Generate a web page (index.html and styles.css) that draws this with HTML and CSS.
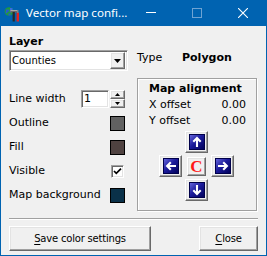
FILE: index.html
```html
<!DOCTYPE html>
<html>
<head>
<meta charset="utf-8">
<link rel="stylesheet" href="styles.css">
</head>
<body>
<div class="window">
  <div class="titlebar">
    <svg class="appicon" viewBox="0 0 16 16" width="16" height="16">
      <circle cx="5" cy="5.5" r="4.3" fill="#1f9a3c"/>
      <path d="M2.2 3.5h2.6v2.2H3.4v1.6H1.6z" fill="#2a55d6"/>
      <path d="M6 2h2.5v2H7.2v2.3H5.8z" fill="#3d6ce0"/>
      <path d="M4.5 7.5h2v2h-2z" fill="#2a55d6"/>
      <rect x="6.5" y="4" width="7" height="2.6" fill="#6a6a6a"/>
      <rect x="6.5" y="4" width="7" height="1" fill="#a8a8a8"/>
      <rect x="8.6" y="6" width="2.2" height="9.5" fill="#2a2a2a"/>
      <rect x="12.6" y="6.5" width="2.4" height="9" fill="#e3231f"/>
      <rect x="13.2" y="4" width="1.2" height="3" fill="#888"/>
    </svg>
    <span class="title">Vector map confi...</span>
    <div class="caption">
      <span class="cb"><svg width="10" height="10" viewBox="0 0 10 10"><path d="M0 4.5h10" stroke="#fff" stroke-width="1"/></svg></span>
      <span class="cb"><svg width="10" height="10" viewBox="0 0 10 10"><rect x=".5" y=".5" width="9" height="9" fill="none" stroke="#6ea3d3" stroke-width="1"/></svg></span>
      <span class="cb"><svg width="10" height="10" viewBox="0 0 10 10"><path d="M0 0L10 10M10 0L0 10" stroke="#fff" stroke-width="1.1"/></svg></span>
    </div>
  </div>

  <div class="client">
    <div class="main">
      <div class="left">
        <div class="label bold layer">Layer</div>
        <div class="combo sunken">
          <span class="combo-text">Counties</span>
          <span class="drop raised"><svg width="7" height="4" viewBox="0 0 7 4"><path d="M0 0h7L3.5 4z" fill="#000"/></svg></span>
        </div>
        <div class="rows">
          <div class="row">
            <span class="label">Line width</span>
            <div class="spin">
              <div class="edit sunken">1</div>
              <div class="spinbtns">
                <div class="sb raised"><svg width="5" height="3" viewBox="0 0 5 3"><path d="M2.5 0L5 3H0z" fill="#000"/></svg></div>
                <div class="sb raised"><svg width="5" height="3" viewBox="0 0 5 3"><path d="M0 0h5L2.5 3z" fill="#000"/></svg></div>
              </div>
            </div>
          </div>
          <div class="row">
            <span class="label">Outline</span>
            <span class="swatch outline"></span>
          </div>
          <div class="row">
            <span class="label">Fill</span>
            <span class="swatch fill"></span>
          </div>
          <div class="row">
            <span class="label">Visible</span>
            <span class="check sunken"><svg width="9" height="9" viewBox="0 0 9 9"><path d="M1 4l2.3 2.4L8 1.6" stroke="#000" stroke-width="1.7" fill="none"/></svg></span>
          </div>
          <div class="row">
            <span class="label">Map background</span>
            <span class="swatch mapbg"></span>
          </div>
        </div>
      </div>

      <div class="right">
        <div class="type"><span class="type-key">Type</span><span class="bold">Polygon</span></div>
        <div class="group">
          <div class="gtitle bold">Map alignment</div>
          <div class="off"><span>X offset</span><span>0.00</span></div>
          <div class="off"><span>Y offset</span><span>0.00</span></div>
          <div class="pad">
            <span></span>
            <span class="abtn raised">
              <svg width="16" height="16" viewBox="0 0 16 16"><defs><linearGradient id="gu" x1="0" y1="0" x2="1" y2="1"><stop offset="0" stop-color="#6a6ae0"/><stop offset=".45" stop-color="#1c1c9c"/><stop offset="1" stop-color="#000058"/></linearGradient></defs><rect x=".5" y=".5" width="15" height="15" fill="url(#gu)" stroke="#00004a"/><path d="M8 13V4M4.3 7.8L8 4.1l3.7 3.7" stroke="#fff" stroke-width="2.1" fill="none"/></svg>
            </span>
            <span></span>
            <span class="abtn raised">
              <svg width="16" height="16" viewBox="0 0 16 16"><defs><linearGradient id="gl" x1="0" y1="0" x2="1" y2="1"><stop offset="0" stop-color="#6a6ae0"/><stop offset=".45" stop-color="#1c1c9c"/><stop offset="1" stop-color="#000058"/></linearGradient></defs><rect x=".5" y=".5" width="15" height="15" fill="url(#gl)" stroke="#00004a"/><path d="M13 8H4M7.8 4.3L4.1 8l3.7 3.7" stroke="#fff" stroke-width="2.1" fill="none"/></svg>
            </span>
            <span class="cbtn-cell"><span class="cbtn raised">C</span></span>
            <span class="abtn raised">
              <svg width="16" height="16" viewBox="0 0 16 16"><defs><linearGradient id="gr" x1="0" y1="0" x2="1" y2="1"><stop offset="0" stop-color="#6a6ae0"/><stop offset=".45" stop-color="#1c1c9c"/><stop offset="1" stop-color="#000058"/></linearGradient></defs><rect x=".5" y=".5" width="15" height="15" fill="url(#gr)" stroke="#00004a"/><path d="M3 8h9M8.2 4.3L11.9 8l-3.7 3.7" stroke="#fff" stroke-width="2.1" fill="none"/></svg>
            </span>
            <span></span>
            <span class="abtn raised">
              <svg width="16" height="16" viewBox="0 0 16 16"><defs><linearGradient id="gd" x1="0" y1="0" x2="1" y2="1"><stop offset="0" stop-color="#6a6ae0"/><stop offset=".45" stop-color="#1c1c9c"/><stop offset="1" stop-color="#000058"/></linearGradient></defs><rect x=".5" y=".5" width="15" height="15" fill="url(#gd)" stroke="#00004a"/><path d="M8 3v9M4.3 8.2L8 11.9l3.7-3.7" stroke="#fff" stroke-width="2.1" fill="none"/></svg>
            </span>
            <span></span>
          </div>
        </div>
      </div>
    </div>

    <div class="sep"></div>

    <div class="buttons">
      <button class="btn raised save"><u>S</u>ave color settings</button>
      <button class="btn raised close"><u>C</u>lose</button>
    </div>
  </div>
</div>
</body>
</html>
```

FILE: styles.css
```css
* {
  box-sizing: border-box;
  margin: 0;
  padding: 0;
}

html, body {
  width: 267px;
  height: 256px;
  overflow: hidden;
}

body {
  background: #f0f0f0;
  font-family: "DejaVu Sans", sans-serif;
  font-size: 11px;
  color: #000;
}

.window {
  width: 267px;
  height: 256px;
  border: 1px solid #0063b1;
  border-top: 0;
  display: flex;
  flex-direction: column;
  background: #f0f0f0;
}

.titlebar {
  height: 26px;
  flex: 0 0 26px;
  margin: 0 -1px;
  background: #0063b1;
  display: flex;
  align-items: center;
  color: #fff;
  font-family: "Noto Sans", sans-serif;
  font-size: 11.6px;
  line-height: 26px;
}

.appicon {
  margin-left: 4px;
  margin-right: 6px;
  margin-top: 1px;
  flex: 0 0 16px;
}

.title {
  flex: 1;
  white-space: nowrap;
}

.caption {
  display: flex;
  margin-right: 1px;
}

.cb {
  width: 46px;
  height: 26px;
  display: flex;
  align-items: center;
  justify-content: center;
}

.client {
  flex: 1;
  padding: 0 8px;
  display: flex;
  flex-direction: column;
}

.main {
  display: flex;
  gap: 9px;
}

.bold {
  font-weight: bold;
}

.label {
  line-height: 13px;
  white-space: nowrap;
}

.left {
  width: 119px;
}

.layer {
  margin-top: 9px;
}

.raised {
  background: #f0f0f0;
  border: 1px solid;
  border-color: #fff #696969 #696969 #fff;
  box-shadow: inset -1px -1px 0 #a0a0a0, inset 1px 1px 0 #e3e3e3;
}

.sunken {
  background: #fff;
  border: 1px solid;
  border-color: #a0a0a0 #fff #fff #a0a0a0;
  box-shadow: inset 1px 1px 0 #696969, inset -1px -1px 0 #e3e3e3;
}

.combo {
  margin-top: 2px;
  height: 21px;
  display: flex;
  align-items: center;
  padding: 2px;
}

.combo-text {
  flex: 1;
  font-size: 10px;
  line-height: 17px;
}

.drop {
  width: 15px;
  height: 17px;
  display: flex;
  align-items: center;
  justify-content: center;
}

.rows {
  margin-top: 16px;
  padding-right: 3px;
}

.row {
  height: 24px;
  display: flex;
  align-items: center;
  justify-content: space-between;
}

.row .label {
  padding-bottom: 2px;
}

.spin {
  display: flex;
  gap: 1px;
  height: 18px;
}

.edit {
  width: 28px;
  height: 18px;
  padding-left: 2px;
  line-height: 16px;
}

.spinbtns {
  width: 15px;
  display: flex;
  flex-direction: column;
}

.sb {
  height: 9px;
  display: flex;
  align-items: center;
  justify-content: center;
}

.swatch {
  width: 15px;
  height: 15px;
  border: 1px solid #000;
}

.outline { background: #616161; }
.fill { background: #4f4240; }
.mapbg { background: #0a3149; }

.check {
  width: 13px;
  height: 13px;
  margin-right: 1px;
  display: flex;
  align-items: center;
  justify-content: center;
}

.right {
  width: 120px;
}

.type {
  margin-top: 25px;
  line-height: 13px;
  display: flex;
}

.type-key {
  width: 45px;
}

.group {
  margin-top: 14px;
  height: 133px;
  border: 1px solid #a0a0a0;
  box-shadow: inset 1px 1px 0 #fff, 1px 1px 0 #fff;
  padding: 3px 10px 0 11px;
}

.gtitle {
  line-height: 13px;
  margin-bottom: 2px;
}

.off {
  height: 16px;
  line-height: 16px;
  display: flex;
  justify-content: space-between;
}

.pad {
  margin-top: 2px;
  margin-left: 10px;
  display: grid;
  grid-template-columns: repeat(3, 23px);
  grid-template-rows: repeat(3, 22px);
  column-gap: 3px;
  row-gap: 2px;
}

.abtn {
  display: flex;
  align-items: center;
  justify-content: center;
}

.cbtn-cell {
  display: flex;
  align-items: center;
  justify-content: center;
}

.cbtn {
  width: 19px;
  height: 19px;
  display: flex;
  align-items: center;
  justify-content: center;
  color: #ff1a1a;
  font-family: "Liberation Serif", serif;
  font-weight: bold;
  font-size: 17px;
  line-height: 17px;
  padding-top: 1px;
}

.sep {
  margin-top: 7px;
  height: 2px;
  border-top: 1px solid #a0a0a0;
  border-bottom: 1px solid #fff;
}

.buttons {
  margin-top: 6px;
  display: flex;
  justify-content: space-between;
}

.btn {
  height: 25px;
  font-family: "DejaVu Sans", sans-serif;
  font-size: 10px;
  letter-spacing: -0.2px;
  color: #000;
  line-height: 21px;
  text-align: center;
}

.btn u {
  text-underline-offset: 2px;
}

.save { width: 142px; }
.close { width: 59px; }
```
